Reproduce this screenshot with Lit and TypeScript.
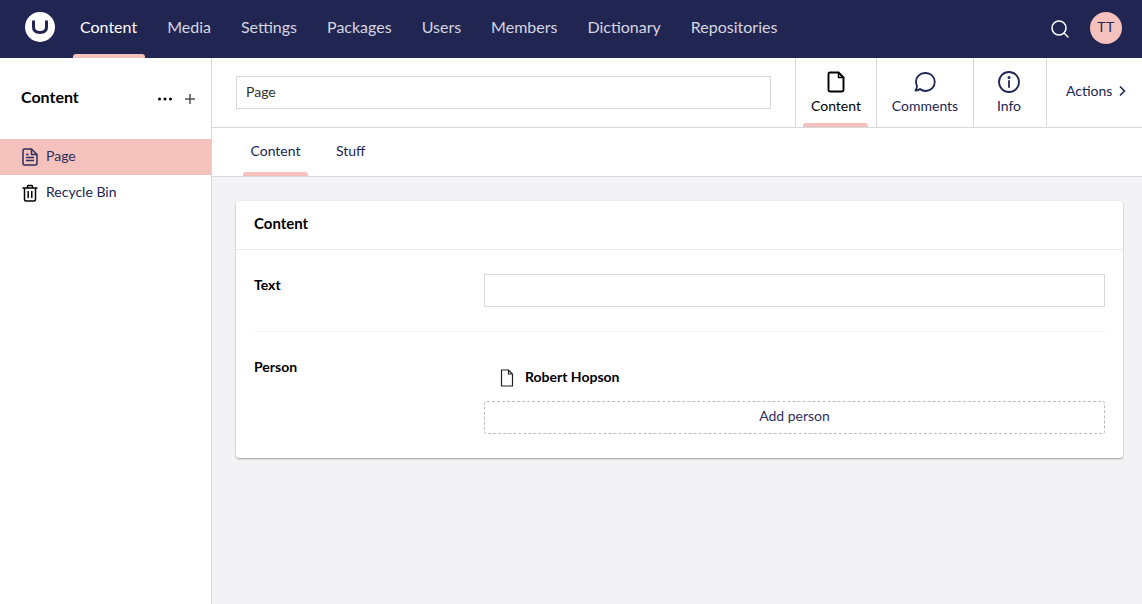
import { LitElement, html, css } from 'lit';
import { customElement } from 'lit/decorators.js';

const sections = ['Content', 'Media', 'Settings', 'Packages', 'Users', 'Members', 'Dictionary', 'Repositories'];

const docIcon = html`<svg viewBox="0 0 24 24" fill="none" stroke="currentColor" stroke-width="1.9" stroke-linejoin="round" stroke-linecap="round">
  <path d="M14.5 2.5H6a1.5 1.5 0 0 0-1.5 1.5v16A1.5 1.5 0 0 0 6 21.5h12a1.5 1.5 0 0 0 1.5-1.5V7.5z" />
  <path d="M14.5 2.5v5h5" stroke-width="1.5" />
</svg>`;

@customElement('app-root')
export class AppRoot extends LitElement {
  static styles = css`
    :host {
      display: flex;
      flex-direction: column;
      height: 604px;
      overflow: hidden;
      font-family: Lato, sans-serif;
      font-size: 14px;
      color: #212552;
      background: #fff;
    }

    svg {
      display: block;
    }

    .topbar {
      flex: none;
      height: 58px;
      display: flex;
      align-items: stretch;
      background: #212552;
      color: #fff;
    }

    .logo {
      width: 30px;
      height: 30px;
      margin: 12px 10px 0 25px;
    }

    .nav {
      display: flex;
      flex: 1;
    }

    .nav-item {
      position: relative;
      display: flex;
      align-items: center;
      padding: 0 15px 5px;
      font-size: 16px;
      color: #d5d7e0;
    }

    .nav-item.active {
      color: #fff;
    }

    .nav-item.active::after {
      content: '';
      position: absolute;
      left: 8px;
      right: 7px;
      bottom: 0;
      height: 4px;
      border-radius: 3px 3px 0 0;
      background: #f5c1bc;
    }

    .top-tools {
      display: flex;
      align-items: flex-start;
      gap: 20px;
      padding: 12px 20px 0 0;
    }

    .search {
      width: 20px;
      height: 20px;
      margin-top: 7px;
    }

    .avatar {
      width: 32px;
      height: 32px;
      border-radius: 50%;
      background: #f5c1bc;
      color: #212552;
      font-size: 14px;
      letter-spacing: 0.5px;
      display: flex;
      align-items: center;
      justify-content: center;
      padding-bottom: 3px;
      box-sizing: border-box;
    }

    .body {
      flex: 1;
      display: flex;
      min-height: 0;
    }

    .sidebar {
      flex: none;
      width: 212px;
      box-sizing: border-box;
      border-right: 1px solid #d8d7d9;
    }

    .tree-head {
      height: 81px;
      display: flex;
      align-items: center;
      padding: 0 15px 0 21px;
      box-sizing: border-box;
      color: #000;
    }

    .tree-title {
      flex: 1;
      font-size: 16px;
      font-weight: 700;
      padding-bottom: 4px;
    }

    .tree-tools {
      display: flex;
      align-items: center;
      gap: 11px;
    }

    .dots {
      width: 16px;
      height: 16px;
      color: #000;
    }

    .plus {
      width: 12px;
      height: 12px;
      color: #515054;
    }

    .tree-row {
      height: 36px;
      display: flex;
      align-items: center;
      gap: 8px;
      padding-left: 22px;
    }

    .tree-row span {
      padding-bottom: 4px;
    }

    .tree-row.active {
      background: #f5c1bc;
      color: #2e2f5e;
    }

    .tree-row.bin {
      color: #000;
    }

    .tree-row.bin span {
      color: #212552;
    }

    .tree-row svg {
      width: 16px;
      height: 18px;
      flex: none;
    }

    .main {
      flex: 1;
      min-width: 0;
      display: flex;
      flex-direction: column;
      background: #f3f3f5;
    }

    .editor-head {
      flex: none;
      height: 70px;
      display: flex;
      box-sizing: border-box;
      background: #fff;
      border-bottom: 1px solid #d8d7d9;
    }

    .name-wrap {
      flex: 1;
      display: flex;
      align-items: flex-start;
      padding: 18px 24px 0;
    }

    .field {
      box-sizing: border-box;
      width: 100%;
      height: 33px;
      border: 1px solid #d8d7d9;
      background: #fff;
      display: flex;
      align-items: center;
      padding: 0 9px 2px;
      color: #303033;
    }

    .app {
      position: relative;
      display: flex;
      flex-direction: column;
      align-items: center;
      box-sizing: border-box;
      border-left: 1px solid #d8d7d9;
      padding-top: 12px;
    }

    .app svg {
      width: 24px;
      height: 24px;
      margin-bottom: 3px;
    }

    .app.doc {
      width: 81px;
      color: #000;
    }

    .app.comments {
      width: 97px;
    }

    .app.info {
      width: 73px;
      padding-right: 2px;
    }

    .app.active::after {
      content: '';
      position: absolute;
      left: 7px;
      right: 8px;
      bottom: 0;
      height: 4px;
      border-radius: 3px 3px 0 0;
      background: #f5c1bc;
    }

    .actions {
      width: 96px;
      box-sizing: border-box;
      border-left: 1px solid #d8d7d9;
      display: flex;
      align-items: center;
      gap: 5px;
      padding: 0 0 4px 19px;
    }

    .actions svg {
      width: 10px;
      height: 12px;
    }

    .tabs {
      flex: none;
      height: 49px;
      box-sizing: border-box;
      display: flex;
      gap: 28px;
      padding-left: 31px;
      background: #fff;
      border-bottom: 1px solid #d8d7d9;
    }

    .tab {
      position: relative;
      padding-top: 14px;
    }

    .tab.first {
      width: 65px;
      text-align: center;
    }

    .tab.first::after {
      content: '';
      position: absolute;
      left: 0;
      right: 0;
      bottom: 0;
      height: 4px;
      border-radius: 3px 3px 0 0;
      background: #f5c1bc;
    }

    .content {
      flex: 1;
      padding: 24px 19px 0 24px;
    }

    .card {
      height: 257px;
      box-sizing: border-box;
      background: #fff;
      border-radius: 3px;
      box-shadow: 0 1px 2px rgba(0, 0, 0, 0.35);
    }

    .card-head {
      height: 49px;
      box-sizing: border-box;
      display: flex;
      align-items: center;
      padding: 0 18px 4px;
      border-bottom: 1px solid #e9e9eb;
      font-size: 15px;
      font-weight: 700;
      color: #000;
    }

    .card-body {
      padding: 24px 18px 0;
    }

    .prop {
      display: grid;
      grid-template-columns: 230px 1fr;
    }

    .prop.text {
      height: 57px;
      border-bottom: 1px solid #f3f3f5;
    }

    .prop.person {
      padding-top: 24px;
    }

    .label {
      font-weight: 700;
      color: #000;
      line-height: 17px;
      padding-top: 2px;
    }

    .picked {
      height: 45px;
      display: flex;
      align-items: center;
      gap: 10px;
      padding-left: 15px;
      font-weight: 700;
      color: #000;
    }

    .picked span {
      padding-bottom: 5px;
    }

    .picked svg {
      width: 16px;
      height: 18px;
      margin-bottom: 2px;
    }

    .add {
      height: 33px;
      box-sizing: border-box;
      border: 1px dashed #bbbabf;
      border-radius: 3px;
      display: flex;
      align-items: center;
      justify-content: center;
      padding-bottom: 5px;
      color: #303060;
    }
  `;

  render() {
    return html`
      <header class="topbar">
        <svg class="logo" viewBox="0 0 30 30">
          <circle cx="15" cy="15" r="15" fill="#fff" />
          <path d="M8.5 8.5V15c0 4 2 5.5 6.5 5.5s6.5-1.5 6.5-5.5V8.5" fill="none" stroke="#212552" stroke-width="3" />
        </svg>
        <nav class="nav">
          ${sections.map(
            (s, i) => html`<div class="nav-item ${i === 0 ? 'active' : ''}">${s}</div>`
          )}
        </nav>
        <div class="top-tools">
          <svg class="search" viewBox="0 0 20 20" fill="none" stroke="#fff" stroke-width="1.5" stroke-linecap="round">
            <circle cx="9" cy="9" r="7" />
            <path d="M14 14l4 4" />
          </svg>
          <div class="avatar">TT</div>
        </div>
      </header>
      <div class="body">
        <aside class="sidebar">
          <div class="tree-head">
            <div class="tree-title">Content</div>
            <div class="tree-tools">
              <svg class="dots" viewBox="0 0 16 16" fill="currentColor">
                <circle cx="2.5" cy="8" r="1.5" />
                <circle cx="8" cy="8" r="1.5" />
                <circle cx="13.5" cy="8" r="1.5" />
              </svg>
              <svg class="plus" viewBox="0 0 12 12" fill="none" stroke="currentColor" stroke-width="1.5">
                <path d="M6 1v10M1 6h10" />
              </svg>
            </div>
          </div>
          <div class="tree-row active">
            <svg viewBox="0 0 16 18" fill="none" stroke="currentColor" stroke-width="1.5" stroke-linejoin="round">
              <path d="M9.5 1H2.5A1.5 1.5 0 0 0 1 2.5v13A1.5 1.5 0 0 0 2.5 17h11a1.5 1.5 0 0 0 1.5-1.5V6.5z" />
              <path d="M9.5 1v5.5H15M4 9.5h8M4 12.5h8M4 6.5h2.5" />
            </svg>
            <span>Page</span>
          </div>
          <div class="tree-row bin">
            <svg viewBox="0 0 16 18" fill="none" stroke="currentColor" stroke-width="1.5" stroke-linejoin="round" stroke-linecap="round">
              <path d="M1 4h14M5.5 4V2.5a1 1 0 0 1 1-1h3a1 1 0 0 1 1 1V4M2.5 4v11.5A1.5 1.5 0 0 0 4 17h8a1.5 1.5 0 0 0 1.5-1.5V4M6.2 7.5v6M9.8 7.5v6" />
            </svg>
            <span>Recycle Bin</span>
          </div>
        </aside>
        <main class="main">
          <div class="editor-head">
            <div class="name-wrap"><div class="field">Page</div></div>
            <div class="app doc active">${docIcon}Content</div>
            <div class="app comments">
              <svg viewBox="0 0 24 24" fill="none" stroke="currentColor" stroke-width="1.8" stroke-linejoin="round">
                <path d="M12.5 3a9 9 0 0 1 .5 18c-3 0-5-1-6-2-1 1-2.5 1.5-4.5 1.5 1-1.5 1.5-3 1.5-4.5-1-2-1-3-1-4a9 9 0 0 1 9.5-9z" />
              </svg>
              Comments
            </div>
            <div class="app info">
              <svg viewBox="0 0 24 24" fill="none" stroke="currentColor" stroke-width="1.8" stroke-linecap="round">
                <circle cx="12" cy="12" r="10" />
                <path d="M12 11v6" />
                <circle cx="12" cy="7.5" r="0.6" fill="currentColor" />
              </svg>
              Info
            </div>
            <div class="actions">
              Actions
              <svg viewBox="0 0 10 12" fill="none" stroke="currentColor" stroke-width="1.6">
                <path d="M3 1.5L7.5 6 3 10.5" />
              </svg>
            </div>
          </div>
          <div class="tabs">
            <div class="tab first">Content</div>
            <div class="tab">Stuff</div>
          </div>
          <div class="content">
            <section class="card">
              <div class="card-head">Content</div>
              <div class="card-body">
                <div class="prop text">
                  <div class="label">Text</div>
                  <div class="field"></div>
                </div>
                <div class="prop person">
                  <div class="label">Person</div>
                  <div>
                    <div class="picked">
                      <svg viewBox="0 0 16 18" fill="none" stroke="#222" stroke-width="1.2">
                        <path d="M9.5 1h-7v16h11V5zM9.5 1v4h4" />
                      </svg>
                      <span>Robert Hopson</span>
                    </div>
                    <div class="add">Add person</div>
                  </div>
                </div>
              </div>
            </section>
          </div>
        </main>
      </div>
    `;
  }
}

declare global {
  interface HTMLElementTagNameMap {
    'app-root': AppRoot;
  }
}
